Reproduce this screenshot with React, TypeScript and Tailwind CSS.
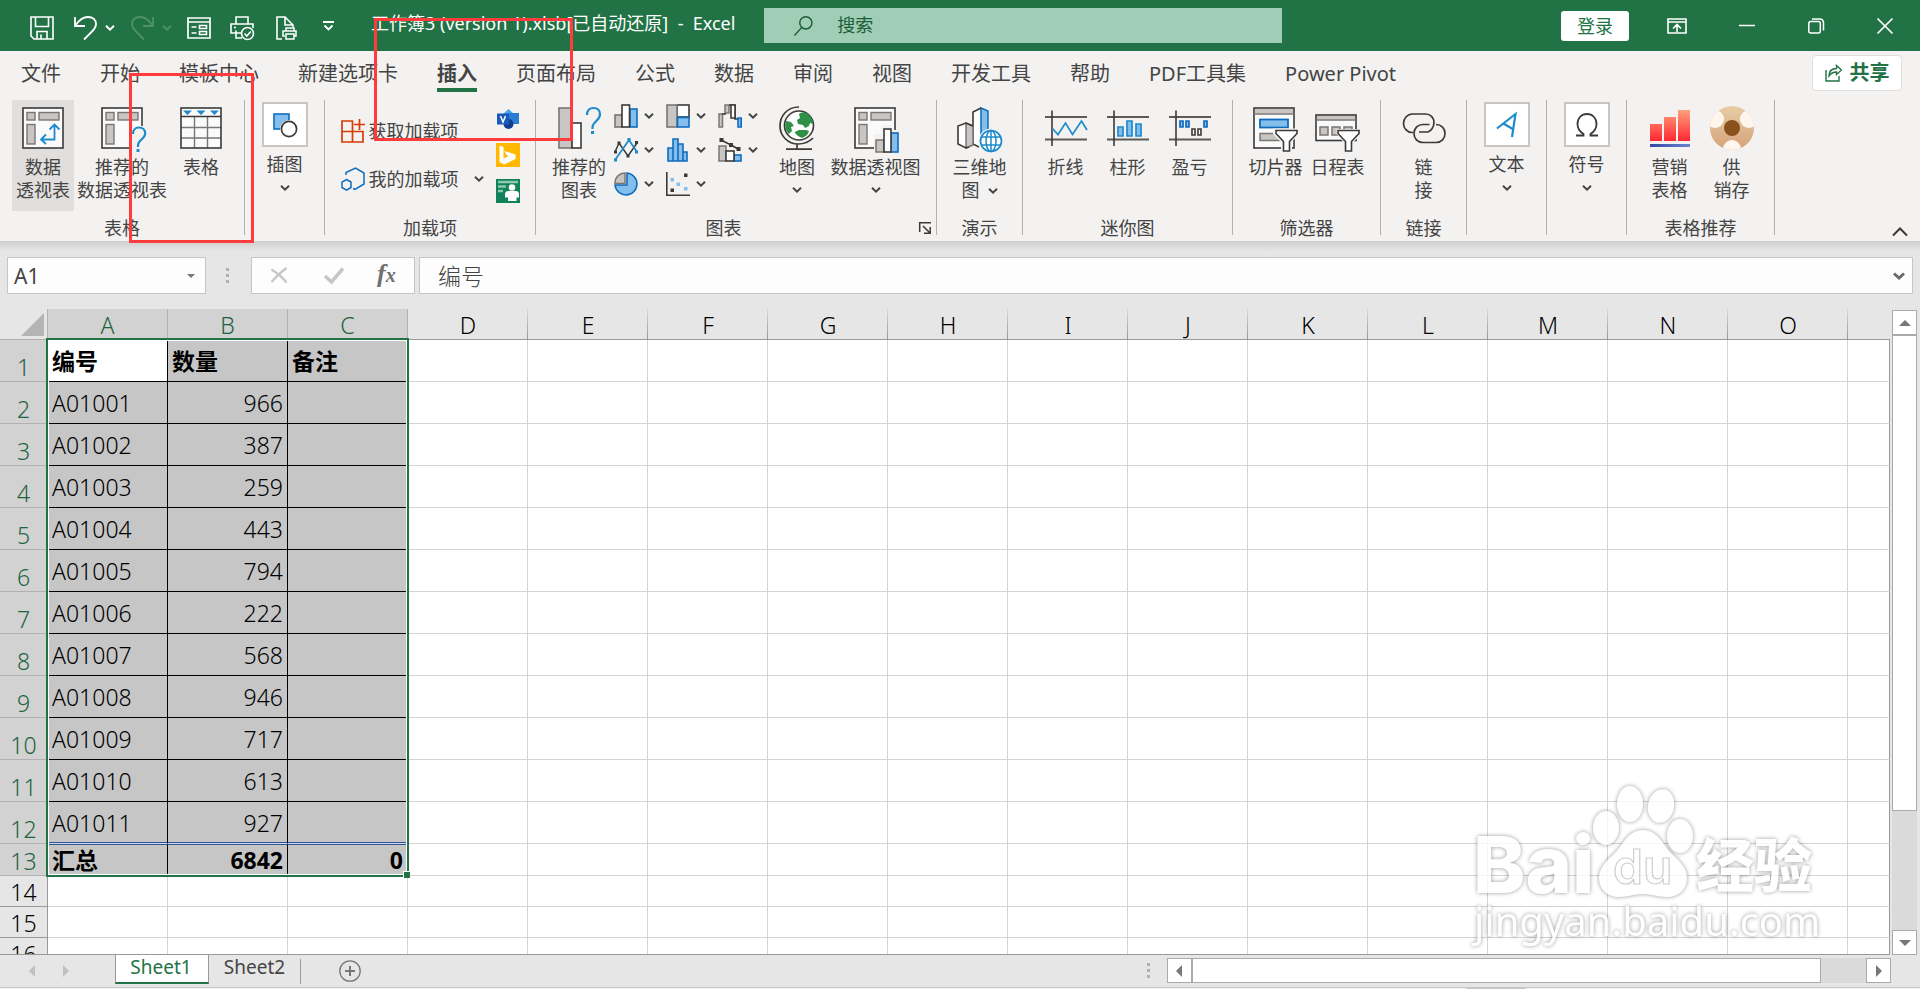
import type { ReactNode } from 'react'
import clsx from 'clsx'

const tabs = ['文件', '开始', '模板中心', '新建选项卡', '插入', '页面布局', '公式', '数据', '审阅', '视图', '开发工具', '帮助', 'PDF工具集', 'Power Pivot']
const columns = ['A', 'B', 'C', 'D', 'E', 'F', 'G', 'H', 'I', 'J', 'K', 'L', 'M', 'N', 'O', '']

const data = [
    ['编号', '数量', '备注'],
    ['A01001', '966', ''],
    ['A01002', '387', ''],
    ['A01003', '259', ''],
    ['A01004', '443', ''],
    ['A01005', '794', ''],
    ['A01006', '222', ''],
    ['A01007', '568', ''],
    ['A01008', '946', ''],
    ['A01009', '717', ''],
    ['A01010', '613', ''],
    ['A01011', '927', ''],
    ['汇总', '6842', '0'],
    ['', '', ''],
    ['', '', ''],
    ['', '', ''],
]

const DARK = '#3b3a39'
const GRAY = '#797673'
const FILL = '#c8c6c4'
const BLUE = '#1e8bcd'
const DEEP = '#0f6cbd'
const SKY = '#83beec'

function Chevron({ className }: { className?: string }) {
    return (
        <svg width="10" height="6" viewBox="0 0 10 6" fill="none" stroke="currentColor" strokeWidth="2" className={className}>
            <path d="M1 .8 5 4.6 9 .8" />
        </svg>
    )
}

function Svg({ w = 42, h = 42, children }: { w?: number, h?: number, children: ReactNode }) {
    return <svg width={w} height={h} viewBox={`0 0 ${w} ${h}`} fill="none" className="block shrink-0 overflow-visible">{children}</svg>
}

function PivotBase() {
    return (
        <>
            <rect x="1" y="1" width="40" height="40" fill="#fafafa" stroke={DARK} strokeWidth="1.6" />
            <rect x="5" y="5.500" width="8" height="7.500" fill={FILL} stroke={GRAY} strokeWidth="1.4" />
            <rect x="17" y="5.500" width="20" height="7.500" fill={FILL} stroke={GRAY} strokeWidth="1.4" />
            <rect x="5" y="17.500" width="8" height="19.500" fill={FILL} stroke={GRAY} strokeWidth="1.4" />
        </>
    )
}

function PivotIcon() {
    return (
        <Svg>
            <PivotBase />
            <path d="M32.500 18v14.500H19M27.500 22.500l5-5 5 5M24 27.500l-5 5 5 4.500" stroke={BLUE} strokeWidth="1.8" />
        </Svg>
    )
}

function RecommendPivotIcon() {
    return (
        <Svg>
            <PivotBase />
            <path d="M31 19h14v26H31z" fill="#f3f2f1" />
            <path d="M32 27c0-4 2.500-6.500 6-6.500s6.200 2.300 6.200 6c0 5.500-7.200 6-7.200 12V40" stroke={BLUE} strokeWidth="2.200" />
            <rect x="35.500" y="42" width="3" height="3" fill={BLUE} />
        </Svg>
    )
}

function TableIcon() {
    return (
        <Svg>
            <rect x="1" y="1" width="40" height="40" fill="#fafafa" />
            <path d="M14.500 9.500V41M27.500 9.500V41M1 20.500h40M1 31h40" stroke={GRAY} strokeWidth="1.4" />
            <rect x="1" y="1" width="40" height="40" stroke={DARK} strokeWidth="1.6" />
            <path d="M1 9.500h40" stroke={DARK} strokeWidth="1.6" />
            <path d="M3 3.500h9l-4.500 4.500zM16.500 3.500h9L21 8zM30 3.500h9L34.500 8z" fill={BLUE} />
        </Svg>
    )
}

function ShapesIcon() {
    return (
        <Svg w={26} h={26}>
            <rect x="2" y="2" width="15" height="15" fill={SKY} stroke={DEEP} strokeWidth="1.600" />
            <circle cx="17" cy="17" r="9" fill="#fff" />
            <circle cx="17" cy="17" r="7.600" fill="#fff" stroke={DARK} strokeWidth="1.700" />
        </Svg>
    )
}

function RecommendChartIcon() {
    return (
        <Svg>
            <rect x="1" y="1" width="13" height="40" fill={FILL} stroke={GRAY} strokeWidth="1.6" />
            <rect x="14" y="16" width="9" height="25" fill="#fff" stroke={DARK} strokeWidth="1.6" />
            <path d="M29 8c0-4.500 2.500-7 6.500-7S42 3.500 42 7.500c0 6-7.500 7-7.500 13V22" stroke={BLUE} strokeWidth="2.200" />
            <rect x="33" y="24" width="3" height="3" fill={BLUE} />
        </Svg>
    )
}

function GlobeIcon() {
    return (
        <Svg w={36} h={44}>
            <circle cx="20" cy="19.500" r="14.500" fill="#fff" stroke={DARK} strokeWidth="1.600" />
            <path d="M20 8c3-2 7-2 10 1 3 2 4 6 4 9l-3-1-1 3-4 2-2-3-5-1-1-4 3-2zM7 15l5 1 3 4-3 1 1 4-3 3c-3-3-5-8-3-13zM16 26l4-2h7l3 1c-1 4-4 6-7 7l-4-2-3-3z" fill="#2f9148" />
            <path d="M20 1C8 1 1 10 1 20s8 18 18 18c6 0 11-2 15-6M18 38v6M7 43.200h26" stroke={DARK} strokeWidth="1.700" />
        </Svg>
    )
}

function PivotChartIcon() {
    return (
        <Svg w={44}>
            <PivotBase />
            <path d="M20 27h7v-9h10v5h8v24H20z" fill="#f3f2f1" />
            <rect x="22" y="33" width="8" height="12" fill={FILL} stroke={GRAY} strokeWidth="1.5" />
            <rect x="37" y="26" width="7" height="19" fill={SKY} stroke={DEEP} strokeWidth="1.6" />
            <rect x="30" y="22" width="7" height="23" fill="#fff" stroke={DARK} strokeWidth="1.6" />
        </Svg>
    )
}

function Map3dIcon() {
    return (
        <Svg w={46}>
            <path d="M16 5l8-4v36l-4 4-4-3z" fill="#fff" />
            <path d="M24 1l7 3v22l-7 4z" fill={SKY} stroke={DEEP} strokeWidth="1.500" />
            <path d="M24 1l-8 4v32l6 3" stroke={DARK} strokeWidth="1.600" />
            <path d="M1 19l8-3v25l-8-4z" fill="#fff" />
            <path d="M9 16l7 3v19l-7 3z" fill={FILL} stroke={GRAY} strokeWidth="1.500" />
            <path d="M16 19l-7-3-8 3v18l8 4 3-1" stroke={DARK} strokeWidth="1.600" />
            <circle cx="34" cy="34" r="12.500" fill="#f3f2f1" />
            <circle cx="34" cy="34" r="10.500" fill="#fff" stroke={BLUE} strokeWidth="1.700" />
            <ellipse cx="34" cy="34" rx="5" ry="10.500" stroke={BLUE} strokeWidth="1.500" />
            <path d="M34 23.500v21M24.500 30h19M24.500 38h19" stroke={BLUE} strokeWidth="1.500" />
        </Svg>
    )
}

function SparkIcon({ children }: { children: ReactNode }) {
    return (
        <Svg>
            <path d="M0 10h42M0 32.500h42" stroke="#5d5a58" strokeWidth="1.800" />
            <path d="M7 3.500V39" stroke={DARK} strokeWidth="1.600" />
            {children}
        </Svg>
    )
}

function Funnel() {
    return <path d="M23 23.500h21v3l-7.500 8V44h-6v-9.500l-7.500-8z" fill="#fff" stroke={DARK} strokeWidth="1.600" />
}

function SlicerIcon() {
    return (
        <Svg w={45}>
            <rect x="1" y="1" width="40" height="40" fill="#fafafa" stroke={DARK} strokeWidth="1.600" />
            <rect x="2" y="2" width="38" height="4.500" fill={FILL} />
            <path d="M1 7h40" stroke={GRAY} strokeWidth="1.500" />
            <rect x="7" y="12.500" width="28" height="8" fill={SKY} stroke={DEEP} strokeWidth="1.800" />
            <rect x="7" y="26.500" width="20" height="7" fill={FILL} stroke={GRAY} strokeWidth="1.500" />
            <path d="M20 21.500h26v6l-7 7V46H28V35l-8-8z" fill="#f3f2f1" />
            <Funnel />
        </Svg>
    )
}

function TimelineIcon() {
    return (
        <Svg w={45}>
            <rect x="1" y="8" width="40" height="25.500" fill="#fafafa" stroke={DARK} strokeWidth="1.600" />
            <rect x="2" y="9" width="38" height="3.500" fill={FILL} />
            <path d="M1 13h40" stroke={GRAY} strokeWidth="1.500" />
            <path d="M5 20h8v8H5zM17 20h8v8h-8zM29 20h8v8h-8z" fill={FILL} stroke={GRAY} strokeWidth="1.500" />
            <path d="M21.500 22h24v6l-7 7v11H28.500V35l-7-8z" fill="#f3f2f1" />
            <Funnel />
        </Svg>
    )
}

function LinkIcon() {
    return (
        <Svg>
            <path d="M10 25.500h-1C4 25.500.500 21 .500 16.500S4 7 9.500 7h13C28 7 31 11 31 15.500S28 25 23 25h-7" stroke={DARK} strokeWidth="1.700" />
            <path d="M26.500 17.500H20c-5.500 0-9 4-9 9s3.500 9 9 9h13c5.500 0 9-4 9-9s-3.500-9-9-9" stroke={DARK} strokeWidth="1.700" />
        </Svg>
    )
}

function MarketingIcon() {
    return (
        <Svg w={40}>
            <defs>
                <linearGradient id="bars" x1="0" y1="3" x2="0" y2="34" gradientUnits="userSpaceOnUse">
                    <stop stopColor="#ffa07a" />
                    <stop offset="1" stopColor="#ff2733" />
                </linearGradient>
                <linearGradient id="base">
                    <stop stopColor="#334aa3" />
                    <stop offset="1" stopColor="#6d82d2" />
                </linearGradient>
            </defs>
            <path d="M0 17h12v17H0zM14 10h12v24H14zM28 3h12v31H28z" fill="url(#bars)" />
            <rect y="37" width="40" height="3" fill="url(#base)" />
        </Svg>
    )
}

function SupplyIcon() {
    return (
        <Svg w={44}>
            <defs>
                <linearGradient id="disc" x2="0" y2="1">
                    <stop stopColor="#e8cda5" />
                    <stop offset="1" stopColor="#d5a27a" />
                </linearGradient>
                <clipPath id="discClip"><circle cx="22" cy="21" r="22" /></clipPath>
            </defs>
            <circle cx="22" cy="21" r="22" fill="url(#disc)" />
            <g fill="#fff6ee" clipPath="url(#discClip)">
                <circle cx="5" cy="12" r="9" />
                <circle cx="39" cy="12" r="9" />
                <circle cx="22" cy="42" r="9" />
            </g>
            <circle cx="22" cy="21" r="8" fill="#88511d" />
        </Svg>
    )
}

// the small chart pickers, in reading order
const chartIcons: [string, ReactNode][] = [
    ['柱形图', <Svg w={24} h={24} key="a">
        <rect x="1" y="11" width="7" height="12" fill={FILL} stroke={GRAY} strokeWidth="1.600" />
        <rect x="16" y="5" width="7" height="18" fill={SKY} stroke={DEEP} strokeWidth="1.600" />
        <rect x="8" y="1" width="7.500" height="22" fill="#fff" stroke={DARK} strokeWidth="1.600" />
    </Svg>],
    ['层次结构图', <Svg w={24} h={24} key="b">
        <rect x="11" y="1" width="12" height="12" fill="#fff" stroke={DARK} strokeWidth="1.600" />
        <rect x="1" y="1" width="10" height="22" fill={FILL} stroke={GRAY} strokeWidth="1.600" />
        <rect x="11.500" y="13.500" width="11.500" height="9.500" fill={SKY} stroke={DEEP} strokeWidth="1.600" />
    </Svg>],
    ['瀑布图', <Svg w={24} h={24} key="c">
        <path d="M1 10h3.500v13H1zM7 1h4v8H7z" fill={FILL} stroke={GRAY} strokeWidth="1.500" />
        <path d="M4 10h4M11 1h6v14h4" stroke={DARK} strokeWidth="1.600" />
        <path d="M13 1h4v13h-4z" fill="#fff" stroke={DARK} strokeWidth="1.600" />
        <path d="M20 14h3.200v9H20z" fill={SKY} stroke={DEEP} strokeWidth="1.600" />
    </Svg>],
    ['折线图', <Svg w={24} h={24} key="d">
        <path d="M1 14 5 5l9 13 9-13" stroke={DARK} strokeWidth="1.500" />
        <path d="M1 22 15 2l8 12" stroke={BLUE} strokeWidth="1.800" />
        <path d="M0 12.500h3v3H0zM3.500 3.500h3v3h-3zM12.500 16.500h3v3h-3zM21 3h3v3h-3z" fill={DARK} />
        <path d="M0 20.500h3v3H0zM13.500 0h3v3h-3zM21 12.500h3v3h-3z" fill={BLUE} />
    </Svg>],
    ['统计图', <Svg w={24} h={24} key="e">
        <path d="M2 10h5v13H2zM7 1h5v22H7zM12 6h5v17h-5zM17 14h4v9h-4z" fill={SKY} stroke={DEEP} strokeWidth="1.600" />
    </Svg>],
    ['组合图', <Svg w={24} h={24} key="f">
        <rect x="1" y="8" width="7" height="15" fill={FILL} stroke={GRAY} strokeWidth="1.500" />
        <rect x="16" y="17" width="7" height="6" fill={SKY} stroke={DEEP} strokeWidth="1.600" />
        <rect x="8" y="13" width="8" height="10" fill="#fff" stroke={DARK} strokeWidth="1.600" />
        <path d="M3 2 13 7l8 4.500" stroke={DARK} strokeWidth="1.600" />
        <path d="M1.500 0h4v4h-4zM11 5h4v4h-4zM18.500 9h4v4h-4z" fill={DARK} />
    </Svg>],
    ['饼图', <Svg w={24} h={24} key="g">
        <path d="M13 1v12H1a11 11 0 1 0 12-12z" fill={SKY} stroke={DEEP} strokeWidth="1.600" />
        <path d="M11 1v10.500H1A10 10 0 0 1 11 1z" fill={FILL} stroke={GRAY} strokeWidth="1.500" />
    </Svg>],
    ['散点图', <Svg w={24} h={24} key="h">
        <path d="M.800 0v23.200H24" stroke={DARK} strokeWidth="1.600" />
        <path d="M18 1.500h3.500V5H18zM4.500 16.500H8V20H4.500z" fill={DARK} />
        <path d="M4.500 6H8v3.500H4.500zM10.500 10.500H14V14h-3.500zM18 15h3.500v3.500H18z" fill={SKY} />
    </Svg>],
]

function Group({ label, className, children }: { label?: string, className: string, children: ReactNode }) {
    return (
        <section className={clsx('flex h-[135px] shrink-0 flex-col justify-between border-r border-[#b3b0ad]', className)}>
            <div className="flex justify-center">{children}</div>
            {label && <div className="text-center leading-[14px]">{label}</div>}
        </section>
    )
}

function BigButton({ icon, lines, className, arrow, active }: { icon: ReactNode, lines: string[], className: string, arrow?: 'below' | 'inline', active?: boolean }) {
    return (
        <button className={clsx('flex h-[111px] shrink-0 flex-col items-center pt-[7px] leading-[23px] whitespace-nowrap', className, active && 'bg-[#e1dfdd]')}>
            <span className="mb-[7px] flex h-[42px] items-center">{icon}</span>
            {lines.map((line, i) => (
                <span key={line} className="flex items-center gap-2">
                    {line}
                    {arrow === 'inline' && i === lines.length - 1 && <Chevron />}
                </span>
            ))}
            {arrow === 'below' && <Chevron className="mt-2" />}
        </button>
    )
}

function BoxButton({ icon, label }: { icon: ReactNode, label: string }) {
    return (
        <button className="flex flex-col items-center pt-[2px]">
            <span className="flex h-[45px] w-[46px] items-center justify-center border-2 border-[#c8c6c4] bg-white">{icon}</span>
            <span className="mt-1 leading-[26px]">{label}</span>
            <Chevron className="mt-2" />
        </button>
    )
}

function TitleBar() {
    return (
        <header className="flex h-[51px] shrink-0 items-center bg-[#217346] text-white">
            <div className="flex w-[764px] shrink-0 items-center pl-[30px]">
                <button aria-label="保存" className="mt-1">
                    <Svg w={24} h={24}>
                        <path d="M1 1h22v22H4l-3-3zM5.500 1v9.500h13V1M7 23v-7.500h10V23M11 18.500V23" stroke="#fff" strokeWidth="1.600" />
                    </Svg>
                </button>
                <button aria-label="撤消" className="mt-1 ml-5 flex items-center gap-2">
                    <Svg w={23} h={24}>
                        <path d="M1 1v9h10M1.500 9.500C5 4 9.500 1 14 1c5 0 8 3 8 7 0 3-1.500 5-3.500 7L10 23.500" stroke="#fff" strokeWidth="1.800" />
                    </Svg>
                    <Chevron />
                </button>
                <button aria-label="恢复" className="mt-1 ml-4 flex items-center gap-2 text-[#4f9069]">
                    <Svg w={23} h={24}>
                        <path d="M22 1v9H12M21.500 9.500C18 4 13.500 1 9 1 4 1 1 4 1 8c0 3 1.500 5 3.500 7l8.500 8.500" stroke="currentColor" strokeWidth="1.800" />
                    </Svg>
                    <Chevron />
                </button>
                <button aria-label="窗体" className="mt-1 ml-[15px]">
                    <Svg w={24} h={24}>
                        <path d="M1 2h22v20H1zM1 6h22" stroke="#fff" strokeWidth="1.700" />
                        <path d="M4.500 11h5M4.500 17h5M12.500 9.500h7v3h-7zM12.500 15.500h7v3h-7z" stroke="#fff" strokeWidth="1.600" />
                    </Svg>
                </button>
                <button aria-label="打印预览" className="mt-1 ml-[19px]">
                    <Svg w={24} h={24}>
                        <path d="M6 8V1h12v7M11 17H1V8h22v4M4 11.500h2M6 14.500V22h6" stroke="#fff" strokeWidth="1.600" />
                        <circle cx="17.500" cy="17.500" r="6" stroke="#fff" strokeWidth="1.600" />
                        <path d="M14.500 17.500l2.300 2.500 4-4.500" stroke="#fff" strokeWidth="1.600" />
                    </Svg>
                </button>
                <button aria-label="快速打印" className="mt-1 ml-[22px]">
                    <Svg w={21} h={24}>
                        <path d="M6 23H1V1h8l8 8v2M9 1v8h8" stroke="#fff" strokeWidth="1.600" />
                        <path d="M10 15v-3h8v3M9 20H7v-5h13v5h-2M10 18h8v5h-8z" stroke="#fff" strokeWidth="1.500" />
                    </Svg>
                </button>
                <button aria-label="自定义快速访问工具栏" className="ml-[26px]">
                    <Svg w={11} h={10}>
                        <path d="M0 1h11M1.500 4.500l4 4 4-4" stroke="#fff" strokeWidth="1.800" />
                    </Svg>
                </button>
                <h1 className="mb-1 ml-[37px] text-[18px] whitespace-pre">工作簿3 (version 1).xlsb[已自动还原]  -  Excel</h1>
            </div>
            <label className="flex h-[35px] w-[27%] shrink-0 items-center bg-[#9fcdb5] pl-[30px]">
                <svg width="21" height="22" viewBox="0 0 21 22" fill="none" stroke="#1b5e38" strokeWidth="1.600">
                    <circle cx="13" cy="7.500" r="6.700" />
                    <path d="M8.500 12.500.500 21.500" />
                </svg>
                <input type="text" aria-label="搜索" placeholder="搜索" className="ml-6 w-full bg-transparent text-[18px] outline-none placeholder:text-[#1b5e38]" />
            </label>
            <div className="ml-auto flex items-center pr-[27px]">
                <button className="h-[30px] w-[68px] rounded-[3px] bg-white text-[18px] leading-[30px] text-[#217346]">登录</button>
                <button aria-label="功能区显示选项" className="ml-[38px]">
                    <Svg w={20} h={16}>
                        <path d="M1 1h18v14H1zM1 4h18M10 14V7M6 10.500l4-4 4 4" stroke="#fff" strokeWidth="1.600" />
                    </Svg>
                </button>
                <button aria-label="最小化" className="ml-[52px]"><Svg w={16} h={16}><path d="M0 7.500h16" stroke="#fff" strokeWidth="1.500" /></Svg></button>
                <button aria-label="还原" className="ml-[53px]">
                    <Svg w={16} h={16}>
                        <rect x=".800" y="3.500" width="11.500" height="11.500" rx="2" stroke="#fff" strokeWidth="1.500" />
                        <path d="M4 1h7.500c2.500 0 4 1.500 4 4v7.500" stroke="#fff" strokeWidth="1.500" />
                    </Svg>
                </button>
                <button aria-label="关闭" className="ml-[53px]"><Svg w={16} h={16}><path d="M.500.500l15 15M15.500.500l-15 15" stroke="#fff" strokeWidth="1.700" /></Svg></button>
            </div>
        </header>
    )
}

function TabBar() {
    return (
        <nav className="flex h-[49px] shrink-0 items-start bg-[#f3f2f1] pl-[21px] text-[20px]">
            <div className="flex gap-[39px]">
                {tabs.map((tab) => (
                    <button key={tab} className={clsx('h-[41px] border-b-4 pt-2 leading-[29px] whitespace-nowrap', tab === '插入' ? 'border-[#217346] font-bold' : 'border-transparent')}>{tab}</button>
                ))}
            </div>
            <button className="mt-1 mr-[18px] ml-auto flex h-9 w-[90px] items-center justify-center gap-2 rounded border border-[#e1dfdd] bg-white font-bold text-[#217346]">
                <svg width="17" height="18" viewBox="0 0 17 18" fill="none" stroke="currentColor" strokeWidth="1.400">
                    <path d="M1 6v11h13v-5" />
                    <path d="M4 12c0-5 3-7.500 7.500-7.500V1.500L16.500 6l-5 4.500V8C8 8 6 9 4 12z" />
                </svg>
                共享
            </button>
        </nav>
    )
}

function Ribbon() {
    return (
        <div className="flex h-[141px] shrink-0 bg-[#f3f2f1] text-[18px]">
            <Group label="表格" className="w-[245px]">
                <BigButton icon={<PivotIcon />} lines={['数据', '透视表']} className="w-[62px]" active />
                <BigButton icon={<RecommendPivotIcon />} lines={['推荐的', '数据透视表']} className="w-24" />
                <BigButton icon={<TableIcon />} lines={['表格']} className="w-[62px]" />
            </Group>
            <Group className="w-20"><BoxButton icon={<ShapesIcon />} label="插图" /></Group>
            <Group label="加载项" className="w-[211px]">
                <div className="flex flex-col gap-6 pt-[19px]">
                    <button className="flex h-6 items-center gap-1">
                        <Svg w={24} h={24}>
                            <path d="M1 2h10.500v21H1zM1 12.500h21V23H1z" stroke="#d83b01" strokeWidth="1.700" />
                            <path d="M18.500 0v11M13 5.500h11" stroke="#d83b01" strokeWidth="1.700" />
                        </Svg>
                        获取加载项
                    </button>
                    <button className="flex h-6 items-center gap-1">
                        <Svg w={24} h={24}>
                            <path d="M5 8V5.500L14.500 1 23 6v11l-9 5.500-2-1" stroke={DEEP} strokeWidth="1.500" />
                            <path d="M5.500 12.500 10 15v5.500l-4.500 2.700L1 20.500V15z" stroke={DEEP} strokeWidth="1.500" />
                        </Svg>
                        我的加载项
                        <Chevron className="ml-[11px]" />
                    </button>
                </div>
                <div className="ml-3 flex flex-col gap-3 pt-[7px]">
                    <button aria-label="Visio">
                        <Svg w={24} h={24}>
                            <path d="M12.500 2l6.500 6-6.500 6L6 8z" fill="#41a5ee" />
                            <path d="M12 6h11v11H12z" fill="#2b7cd3" />
                            <circle cx="12.500" cy="17" r="5" fill="#103f91" />
                            <rect x="1" y="6.500" width="12" height="11" fill="#185abd" />
                            <path d="M4.500 9 7 15l2.500-6" stroke="#fff" strokeWidth="1.500" />
                        </Svg>
                    </button>
                    <button aria-label="Bing">
                        <Svg w={24} h={24}>
                            <rect width="24" height="24" fill="#ffb900" />
                            <path d="M3.500 2.500l4 1.500v11.500l5-2.500-2.500-1.500-1.500-3.500 11 3.500v4.500L8 21.500l-4.500-2.500z" fill="#fff" />
                        </Svg>
                    </button>
                    <button aria-label="People Graph">
                        <Svg w={24} h={24}>
                            <rect width="24" height="24" fill="#12825a" />
                            <path d="M2 3h20M2 7.500h8M2 12h5" stroke="#8fc9b2" strokeWidth="2.500" />
                            <circle cx="16" cy="8.500" r="3.300" fill="#fff" />
                            <path d="M9 18.500v-3.500c0-2 1.500-3 3-3h8c1.500 0 3 1 3 3v3.500h-2.500V22h-8.500v-3.500z" fill="#fff" />
                        </Svg>
                    </button>
                </div>
            </Group>
            <section className="flex h-[135px] w-[401px] shrink-0 flex-col justify-between border-r border-[#b3b0ad]">
                <div className="flex pl-3">
                    <BigButton icon={<RecommendChartIcon />} lines={['推荐的', '图表']} className="w-[62px]" />
                    <div className="ml-1 grid w-[156px] grid-cols-3 content-start gap-y-[10px] pt-1">
                        {chartIcons.map(([name, icon]) => (
                            <button key={name} aria-label={name} className="flex h-6 items-center gap-[6px]">{icon}<Chevron /></button>
                        ))}
                    </div>
                    <BigButton icon={<GlobeIcon />} lines={['地图']} className="w-[54px]" arrow="below" />
                    <BigButton icon={<PivotChartIcon />} lines={['数据透视图']} className="w-[103px]" arrow="below" />
                </div>
                <div className="flex items-center pr-[5px] leading-[14px]">
                    <span className="flex-1 pr-2 text-center">图表</span>
                    <button aria-label="查看所有图表">
                        <Svg w={12} h={12}>
                            <path d="M.700 10V.700H12M4 4l7 7M11.200 5v6.200H5" stroke={DARK} strokeWidth="1.500" />
                        </Svg>
                    </button>
                </div>
            </section>
            <Group label="演示" className="w-[86px]">
                <BigButton icon={<Map3dIcon />} lines={['三维地', '图']} className="w-[84px]" arrow="inline" />
            </Group>
            <Group label="迷你图" className="w-[210px]">
                <BigButton icon={<SparkIcon><path d="M7.500 21.500l5.500 6 7.500-11.500 7 11.500 9-13.500 5.500 9" stroke={BLUE} strokeWidth="1.700" /></SparkIcon>} lines={['折线']} className="w-[62px]" />
                <BigButton icon={<SparkIcon><path d="M11 20h5v9h-5zM20 14h5v15h-5zM29 17h5v12h-5z" fill={SKY} stroke={BLUE} strokeWidth="1.700" /></SparkIcon>} lines={['柱形']} className="w-[62px]" />
                <BigButton icon={<SparkIcon>
                    <path d="M11 14h3v6h-3zM17 14h3v6h-3zM35 14h3v6h-3z" fill={SKY} stroke={DEEP} strokeWidth="1.700" />
                    <path d="M23 22h3v6h-3zM29 22h3v6h-3z" fill="#fff" stroke={DARK} strokeWidth="1.600" />
                </SparkIcon>} lines={['盈亏']} className="w-[62px]" />
            </Group>
            <Group label="筛选器" className="w-[148px]">
                <BigButton icon={<SlicerIcon />} lines={['切片器']} className="w-[62px]" />
                <BigButton icon={<TimelineIcon />} lines={['日程表']} className="w-[62px]" />
            </Group>
            <Group label="链接" className="w-[86px]"><BigButton icon={<LinkIcon />} lines={['链', '接']} className="w-[62px]" /></Group>
            <Group className="w-20">
                <BoxButton label="文本" icon={
                    <Svg w={22} h={26}>
                        <path d="M1 16.500 19.500 2 16 25M7.500 11.500l10 6" stroke={BLUE} strokeWidth="2.200" />
                    </Svg>
                } />
            </Group>
            <Group className="w-20">
                <BoxButton label="符号" icon={
                    <Svg w={24} h={26}>
                        <path d="M1 23.500h7.500V22C4.500 19.500 2.500 16 2.500 12 2.500 6 6.500 2 12 2s9.500 4 9.500 10c0 4-2 7.500-6 10v1.500H23" stroke={DARK} strokeWidth="1.800" />
                    </Svg>
                } />
            </Group>
            <Group label="表格推荐" className="w-[148px]">
                <BigButton icon={<MarketingIcon />} lines={['营销', '表格']} className="w-[62px]" />
                <BigButton icon={<SupplyIcon />} lines={['供', '销存']} className="w-[62px]" />
            </Group>
            <button aria-label="折叠功能区" className="mr-3 mb-[5px] ml-auto self-end">
                <Svg w={16} h={9}><path d="M1 8.500 8 1.500l7 7" stroke={DARK} strokeWidth="2" /></Svg>
            </button>
        </div>
    )
}

function Dots() {
    return (
        <span className="flex flex-col gap-[3px]">
            <i className="size-[3px] bg-[#b1b1b1]" />
            <i className="size-[3px] bg-[#b1b1b1]" />
            <i className="size-[3px] bg-[#b1b1b1]" />
        </span>
    )
}

function FormulaBar() {
    return (
        <div className="flex h-[68px] shrink-0 items-start bg-[#e6e6e6] bg-linear-to-b from-[#cfcfcf] from-0% to-[#e6e6e6] to-[10px] pt-4 pr-[7px] pl-[7px] text-[#444]">
            <div className="flex h-[37px] w-[199px] shrink-0 items-center border border-[#c6c6c6] bg-[#fdfdfd]">
                <input aria-label="名称框" defaultValue="A1" className="min-w-0 flex-1 bg-transparent pt-[2px] pl-[6px] text-[21px] outline-none" />
                <button aria-label="名称列表" className="mr-[10px]"><Svg w={8} h={4}><path d="M0 0h8L4 4z" fill="#777" /></Svg></button>
            </div>
            <div className="flex h-[37px] w-[45px] shrink-0 items-center justify-center pr-[2px]"><Dots /></div>
            <div className="flex h-[37px] w-[164px] shrink-0 items-center border border-[#c6c6c6] bg-[#fdfdfd] pl-[18px]">
                <button aria-label="取消"><Svg w={18} h={17}><path d="M1.500 2.500c5 3 11 8 15 13M16.500 1C11 5 6 10 1.500 15" stroke="#c6c6c6" strokeWidth="2.300" /></Svg></button>
                <button aria-label="输入" className="ml-9"><Svg w={20} h={17}><path d="M1 9l6.500 6L19 1.500" stroke="#c6c6c6" strokeWidth="3.500" /></Svg></button>
                <button aria-label="插入函数" className="mb-1 ml-[33px] font-['Liberation_Serif',serif] text-[26px] font-bold text-[#707070] italic">f<span className="text-[20px]">x</span></button>
            </div>
            <div className="ml-1 flex h-[37px] min-w-0 flex-1 items-center border border-[#c6c6c6] bg-[#fdfdfd]">
                <input aria-label="编辑栏" defaultValue="编号" className="min-w-0 flex-1 bg-transparent pl-[18px] font-['Noto_Sans_CJK_SC',sans-serif] text-[23px] font-light outline-none" />
                <button aria-label="展开编辑栏" className="mr-[7px]"><Svg w={12} h={8}><path d="M1 1.500 6 6l5-4.500" stroke="#6a6a6a" strokeWidth="3" /></Svg></button>
            </div>
        </div>
    )
}

function rowHeight(row: number) {
    if (row < 12) return 'h-[42px]'
    if (row === 12) return 'h-8'
    return 'h-[31px]'
}

function cellClass(row: number, col: number) {
    const inRange = row < 13 && col < 3
    return clsx(
        'border-r border-b px-1 align-middle',
        inRange && !(row === 0 && col === 0) && 'bg-[#c6c6c6]',
        inRange && (row === 0 || row === 12) ? 'font-bold' : 'font-light',
        inRange && (row > 0 && col > 0 ? 'text-right' : 'text-left'),
        inRange && row < 11 && 'border-black',
        inRange && row === 11 && 'border-r-black border-b-[#d0d8ea] shadow-[inset_0_-1px_0_#2f5597]',
        inRange && row === 12 && 'border-t border-r-black border-b-[#d4d4d4] border-t-[#2f5597]',
        !inRange && (col === 15 ? 'border-r-[#999] border-b-[#d4d4d4]' : 'border-[#d4d4d4]'),
    )
}

function Sheet() {
    return (
        <div className="relative min-w-0 flex-1 overflow-hidden border-b border-[#999]">
            <table className="w-full table-fixed border-separate border-spacing-0 bg-white font-['Noto_Sans','Noto_Sans_CJK_SC',sans-serif] text-[23px] leading-7 text-black">
                <colgroup>
                    <col className="w-12" />
                    {columns.slice(0, 15).map((c) => <col key={c} className="w-[120px]" />)}
                    <col />
                </colgroup>
                <thead>
                    <tr className="h-[31px] bg-[#e6e6e6]">
                        <th aria-label="全选" className="border-r border-b border-[#b1b1b1] p-0">
                            <svg width="23" height="23" viewBox="0 0 23 23" className="ml-auto mr-[3px] block"><path d="M23 0v23H0z" fill="#b4b4b4" /></svg>
                        </th>
                        {columns.map((c, i) => (
                            <th key={i} scope="col" className={clsx(
                                'border-b p-0 pt-[2px] font-light',
                                i < 3 && 'border-r border-[#b1b1b1] bg-[#d2d2d2] text-[#1e6441]',
                                i >= 3 && 'border-[#999]',
                                i >= 3 && i < 15 && 'bg-linear-to-b from-[#d8d8d8] to-[#999] bg-[length:1px_100%] bg-right bg-no-repeat',
                            )}>{c}</th>
                        ))}
                    </tr>
                </thead>
                <tbody>
                    {data.map((row, r) => (
                        <tr key={r} className={rowHeight(r)}>
                            <th scope="row" className={clsx(
                                'border-r border-b p-0 align-bottom font-light',
                                r < 13 ? 'border-[#b1b1b1] bg-[#d2d2d2] text-[#1e6441]' : 'border-[#999] bg-[#e6e6e6]',
                            )}>{r + 1}</th>
                            {columns.map((_, c) => <td key={c} className={cellClass(r, c)}>{row[c]}</td>)}
                        </tr>
                    ))}
                </tbody>
            </table>
            {/* selection A1:C13 and its fill handle */}
            <div className="pointer-events-none absolute top-[29px] left-[46px] h-[539px] w-[363px] border-2 border-[#217346]">
                <div className="h-full border border-white" />
                <div className="absolute -right-[3px] -bottom-[3px] size-[7px] border-t border-l border-white bg-[#217346]" />
            </div>
            <Watermark />
        </div>
    )
}

function Watermark() {
    return (
        <svg width="360" height="180" viewBox="0 -3 360 180" fill="#fff" className="pointer-events-none absolute right-[62px] bottom-0 opacity-80 drop-shadow-[0_0_2px_rgba(0,0,0,0.5)]">
            <text x="5" y="116" fontFamily="Inter, sans-serif" fontWeight="800" fontSize="79">Bai</text>
            <ellipse cx="138" cy="51" rx="13" ry="17" />
            <ellipse cx="162" cy="27" rx="13" ry="18" />
            <ellipse cx="193" cy="29" rx="13" ry="17" transform="rotate(12 193 29)" />
            <ellipse cx="212" cy="59" rx="13" ry="17" />
            <path d="M175 53c15 0 20 15 29 24 9 8 15 15 15 24 0 11-8 19-20 19-9 0-15-3-24-3s-15 3-24 3c-12 0-20-8-20-19 0-9 6-16 15-24 9-9 14-24 29-24z" />
            <text x="145" y="107" fontFamily="Inter, sans-serif" fontWeight="600" fontSize="48" stroke="#c4c4c4" strokeWidth="1.200">du</text>
            <text x="228" y="110" fontFamily="'Noto Sans CJK SC', sans-serif" fontWeight="900" fontSize="58">经验</text>
            <text x="6" y="159" fontFamily="'Noto Sans', sans-serif" fontSize="40">jingyan.baidu.com</text>
        </svg>
    )
}

function VerticalScroll() {
    return (
        <div className="mt-px mr-[3px] ml-[2px] flex w-[25px] shrink-0 flex-col bg-[#dadada]">
            <button aria-label="向上滚动" className="flex h-[25px] items-center justify-center border border-[#ababab] bg-white"><Svg w={12} h={6}><path d="M6 0l6 6H0z" fill="#777" /></Svg></button>
            <div className="grow-[477] border border-[#ababab] bg-white" />
            <div className="grow-[120]" />
            <button aria-label="向下滚动" className="flex h-[25px] items-center justify-center border border-[#ababab] bg-white"><Svg w={12} h={6}><path d="M0 0h12L6 6z" fill="#777" /></Svg></button>
        </div>
    )
}

function SheetBar() {
    return (
        <footer className="flex h-[33px] shrink-0 items-start border-b border-[#c6c6c6] bg-[#e6e6e6] pr-[29px] text-[19px] text-[#444]">
            <div className="flex h-8 w-[115px] shrink-0 items-center gap-7 pl-[29px]">
                <button aria-label="上一张"><Svg w={6} h={12}><path d="M6 0v12L0 6z" fill="#c0c0c0" /></Svg></button>
                <button aria-label="下一张"><Svg w={6} h={12}><path d="M0 0v12l6-6z" fill="#c0c0c0" /></Svg></button>
            </div>
            <button className="h-[29px] w-[94px] shrink-0 border-x border-b-2 border-x-[#999] border-b-[#217346] bg-white pr-[2px] pb-1 leading-6 text-[#217346]">Sheet1</button>
            <button className="w-[91px] shrink-0 leading-6">Sheet2</button>
            <i className="mt-1 h-[25px] w-px bg-[#999]" />
            <button aria-label="新工作表" className="mt-[5px] ml-[38px]">
                <Svg w={22} h={22}>
                    <circle cx="11" cy="11" r="10.200" stroke="#777" strokeWidth="1.300" />
                    <path d="M11 6v10M6 11h10" stroke="#777" strokeWidth="2" />
                </Svg>
            </button>
            <div className="mt-[3px] ml-auto flex h-[25px] w-2/5 items-center pl-3">
                <Dots />
                <div className="ml-[17px] flex h-full flex-1 bg-[#dadada]">
                    <button aria-label="向左滚动" className="flex w-[25px] items-center justify-center border border-[#ababab] bg-white"><Svg w={6} h={12}><path d="M6 0v12L0 6z" fill="#777" /></Svg></button>
                    <div className="grow-[629] border border-[#ababab] bg-white" />
                    <div className="grow-[45]" />
                    <button aria-label="向右滚动" className="flex w-[25px] items-center justify-center border border-[#ababab] bg-white"><Svg w={6} h={12}><path d="M0 0v12l6-6z" fill="#777" /></Svg></button>
                </div>
            </div>
        </footer>
    )
}

function App() {
    return (
        <div className="relative flex h-screen flex-col overflow-hidden bg-[#e6e6e6] font-['Noto_Sans','Noto_Sans_CJK_SC',sans-serif] text-[#444]">
            <TitleBar />
            <TabBar />
            <Ribbon />
            <FormulaBar />
            <main className="flex min-h-0 flex-1">
                <Sheet />
                <VerticalScroll />
            </main>
            <SheetBar />
            <div className="flex h-px shrink-0 bg-[#f3f2f1]">
                <i className="mr-[394px] ml-auto w-[60px] bg-[#c6c6c6]" />
            </div>
            {/* callouts drawn over the ribbon */}
            <div className="pointer-events-none absolute top-[73px] left-[129px] h-[170px] w-[125px] border-3 border-[#ff3b3b]" />
            <div className="pointer-events-none absolute top-[18px] left-[374px] h-[123px] w-[199px] border-3 border-[#ff3b3b]" />
        </div>
    )
}

export default App
